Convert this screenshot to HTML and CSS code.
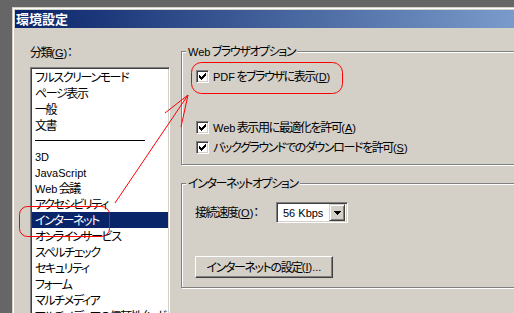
FILE: index.html
```html
<!DOCTYPE html>
<html lang="ja">
<head>
<meta charset="utf-8">
<title>環境設定</title>
<link rel="stylesheet" href="styles.css">
</head>
<body>
<div class="window">
  <div class="titlebar">環境設定</div>
  <div class="client">
    <div class="left">
      <div class="cat-label">分類<span class="l">(<u>G</u>)</span>：</div>
      <ul class="list">
        <li>フルスクリーンモード</li>
        <li>ページ表示</li>
        <li>一般</li>
        <li>文書</li>
        <li class="sep"></li>
        <li><span class="l">3D</span></li>
        <li><span class="l">JavaScript</span></li>
        <li><span class="l">Web</span> 会議</li>
        <li>アクセシビリティ</li>
        <li class="sel">インターネット</li>
        <li>オンラインサービス</li>
        <li>スペルチェック</li>
        <li>セキュリティ</li>
        <li>フォーム</li>
        <li>マルチメディア</li>
        <li>マルチメディアの信頼性（レガシー）</li>
      </ul>
    </div>
    <div class="right">
      <div class="group web">
        <div class="gtitle"><span class="l">Web</span> ブラウザオプション</div>
        <div class="check c1">
          <span class="box"><svg width="7" height="7" viewBox="0 0 7 7"><path d="M0 2h1v3h-1zM1 3h1v3h-1zM2 4h1v3h-1zM3 3h1v3h-1zM4 2h1v3h-1zM5 1h1v3h-1zM6 0h1v3h-1z" fill="#000"/></svg></span>
          <span class="ctext"><span class="l">PDF</span> をブラウザに表示<span class="l">(<u>D</u>)</span></span>
        </div>
        <div class="check c2">
          <span class="box"><svg width="7" height="7" viewBox="0 0 7 7"><path d="M0 2h1v3h-1zM1 3h1v3h-1zM2 4h1v3h-1zM3 3h1v3h-1zM4 2h1v3h-1zM5 1h1v3h-1zM6 0h1v3h-1z" fill="#000"/></svg></span>
          <span class="ctext"><span class="l">Web</span> 表示用に最適化を許可<span class="l">(<u>A</u>)</span></span>
        </div>
        <div class="check c3">
          <span class="box"><svg width="7" height="7" viewBox="0 0 7 7"><path d="M0 2h1v3h-1zM1 3h1v3h-1zM2 4h1v3h-1zM3 3h1v3h-1zM4 2h1v3h-1zM5 1h1v3h-1zM6 0h1v3h-1z" fill="#000"/></svg></span>
          <span class="ctext">バックグラウンドでのダウンロードを許可<span class="l">(<u>S</u>)</span></span>
        </div>
      </div>
      <div class="group inet">
        <div class="gtitle">インターネットオプション</div>
        <div class="speed">
          <span class="slabel">接続速度<span class="l">(<u>O</u>)</span>：</span>
          <div class="combo">
            <span class="cval l">56 Kbps</span>
            <span class="cbtn"><svg width="7" height="4" viewBox="0 0 7 4"><path d="M0 0h7v1h-7zM1 1h5v1h-5zM2 2h3v1h-3zM3 3h1v1h-1z" fill="#000"/></svg></span>
          </div>
        </div>
        <div class="btn">インターネットの設定<span class="l">(<u>I</u>)...</span></div>
      </div>
    </div>
  </div>
</div>
<svg class="annot" width="514" height="313" viewBox="0 0 514 313">
  <g fill="none" stroke="#ff0000" stroke-width="1">
    <rect x="191.5" y="62.5" width="151" height="31" rx="10" ry="10"/>
    <rect x="19.5" y="206.5" width="90" height="30" rx="8" ry="8"/>
    <line x1="115" y1="203" x2="188" y2="95"/>
    <line x1="165" y1="113" x2="188" y2="95"/>
    <line x1="181" y1="127" x2="188" y2="95"/>
  </g>
</svg>
</body>
</html>
```
FILE: styles.css
```css
html, body {
  margin: 0;
  height: 100%;
}
body {
  background: #666666;
  overflow: hidden;
  position: relative;
  font-family: "Noto Sans CJK JP", sans-serif;
  font-size: 12px;
  color: #000;
  font-feature-settings: "palt";
  letter-spacing: -1.4px;
}
.l {
  font-family: "Liberation Sans", "Noto Sans CJK JP", sans-serif;
  font-size: 11px;
  font-feature-settings: normal;
  letter-spacing: 0;
}
u {
  text-underline-offset: 1px;
}
.window {
  margin: 7px 0 0 12px;
  width: 704px;
  height: 420px;
  box-sizing: border-box;
  background: #d4d0c8;
  border: 1px solid #d4d0c8;
  box-shadow: inset 1px 1px #ffffff;
  padding: 2px;
}
.titlebar {
  height: 18px;
  line-height: 18px;
  padding-left: 1px;
  background: linear-gradient(to right, #0a246a, #a6caf0);
  color: #fff;
  font-weight: bold;
  font-size: 13px;
  font-feature-settings: normal;
  letter-spacing: 0;
}
.client {
  display: flex;
  align-items: flex-start;
}
.left {
  margin-left: 15px;
  width: 140px;
  flex: none;
}
.cat-label {
  margin-top: 17px;
  height: 14px;
  line-height: 14px;
}
.list {
  margin: 8px 0 0;
  list-style: none;
  width: 140px;
  height: 300px;
  box-sizing: border-box;
  background: #fff;
  border: 1px solid;
  border-color: #808080 #ffffff #ffffff #808080;
  box-shadow: inset 1px 1px #404040, inset -1px -1px #d4d0c8;
  padding: 1px;
  overflow: hidden;
}
.list li {
  height: 16px;
  line-height: 16px;
  padding-left: 3px;
  white-space: nowrap;
  overflow: hidden;
}
.list li.sep {
  height: 15px;
  display: flex;
  align-items: center;
}
.list li.sep::after {
  content: "";
  width: 110px;
  height: 1px;
  background: #000;
}
.list li.sel {
  background: #0a246a;
  color: #fff;
}
.right {
  margin-left: 11px;
  flex: 1;
}
.group {
  box-sizing: border-box;
  width: 400px;
  border: 1px solid #808080;
  box-shadow: inset 1px 1px #ffffff, 1px 1px #ffffff;
}
.web {
  margin-top: 23px;
  height: 114px;
}
.inet {
  margin-top: 18px;
  height: 105px;
}
.gtitle {
  margin: -8px 0 0 4px;
  padding: 0 2px;
  width: max-content;
  background: #d4d0c8;
  height: 14px;
  line-height: 14px;
}
.check {
  display: flex;
  align-items: center;
  gap: 4px;
  height: 13px;
  margin-left: 14px;
  line-height: 14px;
}
.c1 { margin-top: 12px; }
.c2 { margin-top: 38px; }
.c3 { margin-top: 7px; }
.box {
  flex: none;
  width: 13px;
  height: 13px;
  box-sizing: border-box;
  border: 1px solid;
  border-color: #808080 #ffffff #ffffff #808080;
  box-shadow: inset 1px 1px #404040, inset -1px -1px #d4d0c8;
  background: #fff;
  display: flex;
  align-items: center;
  justify-content: center;
}
.box svg { display: block; }
.speed {
  display: flex;
  align-items: center;
  margin: 12px 0 0 13px;
}
.slabel {
  width: 81px;
  flex: none;
  line-height: 14px;
}
.combo {
  width: 72px;
  height: 21px;
  box-sizing: border-box;
  border: 1px solid;
  border-color: #808080 #ffffff #ffffff #808080;
  box-shadow: inset 1px 1px #404040, inset -1px -1px #d4d0c8;
  background: #fff;
  padding: 2px;
  display: flex;
  align-items: center;
}
.cval {
  flex: 1;
  padding-left: 4px;
}
.cbtn {
  width: 16px;
  height: 17px;
  box-sizing: border-box;
  background: #d4d0c8;
  border: 1px solid;
  border-color: #d4d0c8 #404040 #404040 #d4d0c8;
  box-shadow: inset 1px 1px #ffffff, inset -1px -1px #808080;
  display: flex;
  align-items: center;
  justify-content: center;
}
.cbtn svg { display: block; }
.btn {
  margin: 33px 0 0 13px;
  width: 138px;
  height: 22px;
  box-sizing: border-box;
  border: 1px solid;
  border-color: #ffffff #404040 #404040 #ffffff;
  box-shadow: inset -1px -1px #808080;
  display: flex;
  align-items: center;
  justify-content: center;
  line-height: 14px;
}
.annot {
  position: absolute;
  left: 0;
  top: 0;
  pointer-events: none;
}
```
